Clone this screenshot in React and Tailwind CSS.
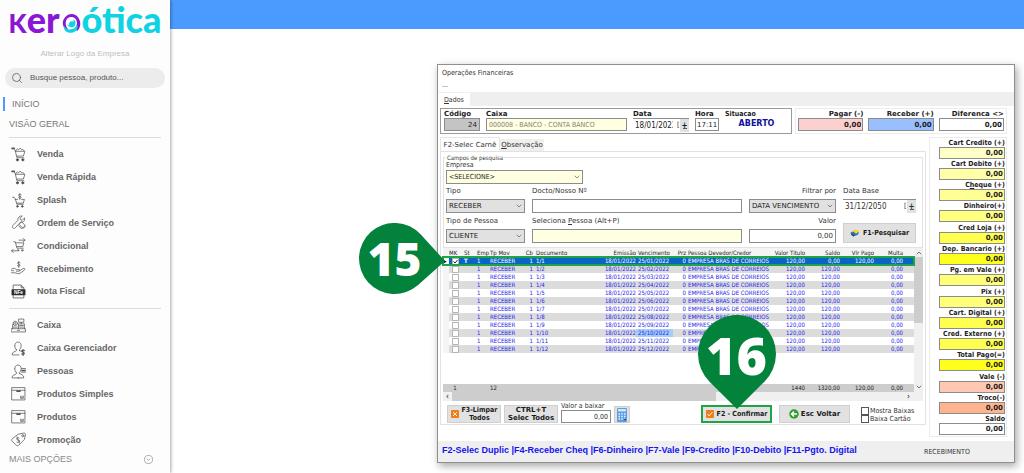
import { ChevronDown, Search } from 'lucide-react';

const LABEL = "font-['DejaVu_Sans_Condensed','DejaVu_Sans',sans-serif] text-[7px] leading-[8px] text-[#333]";
const BOLD = "font-['DejaVu_Sans','Noto_Sans',sans-serif] text-[7px] leading-[8px] font-bold text-[#1c1c1c]";
const BOLD_NARROW = "font-['DejaVu_Sans_Condensed','DejaVu_Sans',sans-serif] text-[7px] leading-[8px] font-bold text-[#1c1c1c]";
const VALUE = "font-['DejaVu_Sans_Condensed','DejaVu_Sans',sans-serif] text-[8px]";
const FIELD = 'block w-full min-w-0 rounded-none border border-[#8c8c8c] px-[2px] outline-none';
const BUTTON = 'flex items-center justify-center border border-[#cfcfcf] bg-[#e1e1e1]';

/* ---------- sidebar icons ---------- */

function Glyph({ children }) {
  return (
    <svg viewBox="0 0 28 28" className="size-[15px] shrink-0" fill="none" stroke="#555" strokeWidth="1.4" strokeLinecap="round" strokeLinejoin="round" aria-hidden="true">
      {children}
    </svg>
  );
}

function CartIcon() {
  return (
    <Glyph>
      <path d="M2 3h4l2 4 3 13h13M8 8h18l-3 9H11" />
      <path d="M9 7c1-4 4-4 5-2 1-3 5-3 6 0 2-1 4 0 4 2" />
      <path d="M2 2.500h4" strokeWidth="3" />
      <circle cx="12" cy="24" r="2" fill="#333" />
      <circle cx="22" cy="24" r="2" fill="#333" />
    </Glyph>
  );
}

function SplashIcon() {
  return (
    <Glyph>
      <path d="M3 8h3l2 3 3 10h12M8 12h4M20 12h5l-2 7H11" />
      <path d="M19 3c-1-1-5-1-5 1s5 2 5 4-4 2-5 1M16.500 1v11" />
      <circle cx="12" cy="25" r="1.500" fill="#333" />
      <circle cx="21" cy="25" r="1.500" fill="#333" />
    </Glyph>
  );
}

function WrenchIcon() {
  return (
    <Glyph>
      <path d="M25 6l-4 4-3-1-1-3 4-4c-5-1-9 3-8 8L3 20c-2 3 2 7 5 4l10-11c5 1 9-2 7-7z" />
      <path d="M16 16l4-3 5 5c3 4-1 8-5 5l-4-5M14 20l6 6 6-6" />
    </Glyph>
  );
}

function ConditionalIcon() {
  return (
    <Glyph>
      <path d="M5 7h3l3 12h12M9 9h15l-2 7H11M15 4h11M23 1l3 3-3 3" />
      <path d="M1 24h9M4 21l-3 3 3 3" />
      <circle cx="13" cy="23" r="1.500" />
      <circle cx="21" cy="23" r="1.500" />
    </Glyph>
  );
}

function HandMoneyIcon() {
  return (
    <Glyph>
      <path d="M17 3c-1-1-5-1-5 1s5 2 5 4-4 2-5 1M14.500 1v11" />
      <path d="M1 15c4-2 6-2 9 1h5c2 0 2 3 0 3h-5M16 18l7-4c2-1 4 1 2 3l-8 6c-4 2-7-1-10-1H1M1 18h4" />
    </Glyph>
  );
}

function InvoiceIcon() {
  return (
    <svg viewBox="0 0 28 28" className="size-[15px] shrink-0" aria-hidden="true">
      <path d="M4 10V2h15l5 5v3M4 20v6h20v-6M19 2v5h5" fill="none" stroke="#555" strokeWidth="1.500" />
      <rect x="1" y="10" width="26" height="11" rx="1" fill="#2b2b2b" />
      <text x="14" y="18.500" textAnchor="middle" fontSize="9" fontWeight="700" fontFamily="Liberation Sans, sans-serif" fill="#fff">NFe</text>
    </svg>
  );
}

function RegisterIcon() {
  return (
    <Glyph>
      <path d="M1 20h26v6H1zM3 20v-8l3-2M25 20v-8M14 20V11h11M12 23h4" />
      <circle cx="8" cy="10" r="4" />
      <path d="M8 8v4M15 2h9v6h-9zM19 8v3M16 14h7M16 17h7M4 17h8" />
    </Glyph>
  );
}

function PersonBase() {
  return (
    <path d="M7 9c0-4 2-7 6-7s6 3 6 7c0 3-2 6-3 7v2M10 16v2c-1 2-8 2-8 7v1h13M10 16c-2-2-3-4-3-7" />
  );
}

function ManagerIcon() {
  return (
    <Glyph>
      <PersonBase />
      <path d="M16 18c1 1 2 1 3 1" />
      <path d="M25 18c-1-2-5-1-5 1s5 2 5 4-4 3-5 1M22.500 16v11" strokeWidth="2" />
    </Glyph>
  );
}

function PeopleIcon() {
  return (
    <Glyph>
      <PersonBase />
      <path d="M16 18c2 1 8 2 8 8H13" />
      <path d="M20 9h7M20 12h7M20 15h7" strokeWidth="2" />
    </Glyph>
  );
}

function BoxIcon() {
  return (
    <Glyph>
      <path d="M2 3h24v23H2zM2 8h24" />
      <path d="M11 9.500h6" strokeWidth="3" />
      <path d="M18 19v4h5v-4M20.500 19v3" />
    </Glyph>
  );
}

function TagIcon() {
  return (
    <Glyph>
      <path d="M14 4l10-2c2 0 3 1 3 3l-2 9-11 11c-1 1-3 1-4 0L2 17c-1-1-1-3 0-4z" />
      <circle cx="22" cy="7" r="2" />
      <path d="M15 11c-2-2-6 1-4 3s4 0 5 2-2 5-5 3M11 9l5 12" />
    </Glyph>
  );
}

const salesItems = [
  ['Venda', CartIcon],
  ['Venda Rápida', CartIcon],
  ['Splash', SplashIcon],
  ['Ordem de Serviço', WrenchIcon],
  ['Condicional', ConditionalIcon],
  ['Recebimento', HandMoneyIcon],
  ['Nota Fiscal', InvoiceIcon],
];

const registerItems = [
  ['Caixa', RegisterIcon],
  ['Caixa Gerenciador', ManagerIcon],
  ['Pessoas', PeopleIcon],
  ['Produtos Simples', BoxIcon],
  ['Produtos', BoxIcon],
  ['Promoção', TagIcon],
];

function Logo() {
  return (
    <div className="flex h-10 items-baseline justify-center font-['Lato',sans-serif] leading-[38px] font-black" aria-label="Keroótica">
      <span className="text-[26px] text-[#8a17d3]">K</span>
      <span className="text-[36px] text-[#8a17d3]">er</span>
      <svg viewBox="0 0 60 60" className="mx-px size-5 shrink-0" fill="none" aria-hidden="true">
        <path d="M14 50A26 26 0 0 1 10 16C20 0 42 -2 52 14C62 28 58 46 48 54L42 46C50 38 50 24 42 16C32 8 18 12 15 24C13 32 14 42 22 50Z" fill="#8a17d3" />
        <path d="M10 38C12 46 20 50 30 49C40 48 46 42 47 34C54 42 48 56 34 59C18 61 6 52 10 38Z" fill="#0fd3e3" />
        <path d="M18 34C22 44 36 46 42 36C46 28 42 22 36 19C40 26 36 30 30 36C26 38 21 38 18 34Z" fill="#0fd3e3" />
        <circle cx="33" cy="34" r="9" fill="#0fd3e3" />
      </svg>
      <span className="text-[36px] text-[#0fd3e3]">ótica</span>
    </div>
  );
}

function NavList({ items, grow }) {
  return (
    <ul className={`flex flex-col ${grow}`}>
      {items.map(([name, Icon]) => (
        <li key={name} className="flex flex-1">
          <a href="#" className="flex flex-1 items-center gap-[11px] pl-[11px] text-[9px] leading-3 font-bold text-[#666]">
            <Icon />
            {name}
          </a>
        </li>
      ))}
    </ul>
  );
}

function Sidebar() {
  return (
    <aside className="z-10 flex w-[170px] shrink-0 flex-col bg-[#fdfdfd] pb-[5px] font-['Liberation_Sans',sans-serif] shadow-[1px_0_3px_rgba(0,0,0,0.35)]">
      <Logo />
      <a href="#" className="mt-2 text-center text-[8px] leading-3 text-[#bdbdbd]">Alterar Logo da Empresa</a>
      <label className="mx-[5px] mt-2 flex h-5 items-center gap-[7px] rounded-full bg-[#ececec] pl-[6px]">
        <Search className="size-3 text-[#555]" strokeWidth={1.5} />
        <input type="search" aria-label="Busca" placeholder="Busque pessoa, produto..." className="min-w-0 flex-1 bg-transparent text-[8px] outline-none placeholder:text-[#555]" />
      </label>
      <a href="#" className="mt-[9px] ml-[3px] border-l-2 border-[#4b9bfa] pl-[7px] text-[9px] leading-[14px] text-[#777]">INÍCIO</a>
      <a href="#" className="mt-[6px] pl-[9px] text-[9px] leading-[14px] text-[#777]">VISÃO GERAL</a>
      <hr className="mx-[9px] mt-[6px] mb-[5px] border-[#dcdcdc]" />
      <NavList items={salesItems} grow="flex-[7]" />
      <hr className="mx-[9px] my-[5px] border-[#dcdcdc]" />
      <NavList items={registerItems} grow="flex-[6]" />
      <button type="button" className="flex items-center justify-between pr-[17px] pl-[9px] text-[9px] leading-[17px] text-[#888]">
        MAIS OPÇÕES
        <svg viewBox="0 0 20 20" className="size-[9px]" fill="none" stroke="#999" strokeWidth="1.8" aria-hidden="true">
          <circle cx="10" cy="10" r="9" />
          <path d="M6 8l4 4 4-4" />
        </svg>
      </button>
    </aside>
  );
}

/* ---------- form pieces ---------- */

function Select({ id, value, tone }) {
  return (
    <div className="relative">
      <select id={id} className={`${FIELD} h-[14px] appearance-none text-[#222] ${tone}`}>
        <option>{value}</option>
      </select>
      <ChevronDown className="pointer-events-none absolute top-[3px] right-[2px] size-2 text-[#555]" />
    </div>
  );
}

function DateField({ id, value }) {
  return (
    <div className={`flex h-[14px] border-t border-[#8c8c8c] ${VALUE}`}>
      <input id={id} defaultValue={value} className="min-w-0 flex-1 pl-[2px] outline-none" />
      <span className="ml-1 w-[3px] overflow-hidden text-[7px] leading-3">[</span>
      <button type="button" aria-label="Ajustar data" className="flex w-[9px] flex-col items-center justify-center bg-[#e1e1e1] text-[8px] leading-[5px] font-bold">
        <span>+</span>
        <span className="h-px w-1 bg-[#555]" />
      </button>
    </div>
  );
}

const topAmounts = [
  ['pagar', 'Pagar (-)', 'bg-[#fbd0cf]'],
  ['receber', 'Receber (+)', 'bg-[#99bfff]'],
  ['diferenca', 'Diferenca <>', 'bg-white'],
];

function HeaderRow() {
  return (
    <div className="flex gap-[3px] pr-[7px] pl-[2px]">
      <div className={`flex flex-1 gap-[6px] border border-[#9a9a9a] px-[3px] pt-[1px] pb-px ${BOLD}`}>
        <div className="w-9">
          <label htmlFor="codigo">Código</label>
          <input id="codigo" defaultValue="24" className={`${FIELD} h-[13px] bg-[#c4c4c4] text-right font-normal`} />
        </div>
        <div className="min-w-0 flex-1">
          <label htmlFor="caixa">Caixa</label>
          <input id="caixa" defaultValue="000008 - BANCO - CONTA BANCO" className={`${FIELD} h-[13px] bg-[#ffffe1] font-['DejaVu_Sans_Condensed','DejaVu_Sans',sans-serif] font-normal text-[#85857a]`} />
        </div>
        <div className="w-14 font-normal">
          <label htmlFor="data" className="font-bold">Data</label>
          <DateField id="data" value="18/01/2022" />
        </div>
        <div className="w-6">
          <label htmlFor="hora">Hora</label>
          <input id="hora" defaultValue="17:11" className={`${FIELD} h-[13px] px-px font-normal`} />
        </div>
        <div className="w-[63px]">
          <p className={BOLD_NARROW}>Situacao</p>
          <p className="pt-[2px] text-center text-[8px] text-[#10109a]">ABERTO</p>
        </div>
      </div>
      <div className={`flex w-[212px] gap-[5px] border border-[#ececec] px-[2px] pt-[1px] text-right ${BOLD}`}>
        {topAmounts.map(([id, text, tone]) => (
          <div key={id} className="flex-1">
            <label htmlFor={id}>{text}</label>
            <input id={id} defaultValue="0,00" className={`${FIELD} h-[13px] px-px text-right ${tone}`} />
          </div>
        ))}
      </div>
    </div>
  );
}

function Cell({ id, label, right, children }) {
  return (
    <div className="flex flex-col gap-1">
      <label htmlFor={id} className={right ? 'text-right' : ''}>{label}</label>
      {children}
    </div>
  );
}

function SearchForm() {
  return (
    <fieldset className={`mx-[2px] border border-[#e2e2e2] pr-[6px] pb-1 pl-[2px] ${LABEL}`}>
      <legend className="px-px text-[6px] leading-[7px]">Campos de pesquisa</legend>
      <div className="flex w-[137px] flex-col gap-px">
        <label htmlFor="empresa">Empresa</label>
        <Select id="empresa" value="<SELECIONE>" tone="bg-[#ffffe1]" />
      </div>
      <div className="mt-[3px] grid grid-cols-[79px_1fr_87px_73px] items-end gap-x-[7px] gap-y-[4px] font-['DejaVu_Sans',sans-serif]">
        <Cell id="tipo" label="Tipo">
          <Select id="tipo" value="RECEBER" tone="bg-[#e1e1e1]" />
        </Cell>
        <Cell id="docto" label="Docto/Nosso Nº">
          <input id="docto" className={`${FIELD} h-[14px]`} />
        </Cell>
        <Cell id="filtro" label="Filtrar por" right>
          <Select id="filtro" value="DATA VENCIMENTO" tone="bg-[#e1e1e1]" />
        </Cell>
        <Cell id="database" label="Data Base">
          <DateField id="database" value="31/12/2050" />
        </Cell>
        <Cell id="tipopessoa" label="Tipo de Pessoa">
          <Select id="tipopessoa" value="CLIENTE" tone="bg-[#e1e1e1]" />
        </Cell>
        <Cell id="pessoa" label={<>Seleciona <u>P</u>essoa (Alt+P)</>}>
          <input id="pessoa" className={`${FIELD} h-[14px] bg-[#ffffe1]`} />
        </Cell>
        <Cell id="valor" label="Valor" right>
          <input id="valor" defaultValue="0,00" className={`${FIELD} h-[14px] text-right`} />
        </Cell>
        <button type="button" className={`${BUTTON} ${BOLD_NARROW} h-5 gap-[3px]`}>
          <svg viewBox="0 0 30 24" className="h-2 w-[10px]" aria-hidden="true">
            <path d="M1 11l12-6 14 3-3 9-12 5z" fill="#2777b8" />
            <path d="M8 6c4-6 17-4 19 2l-9 6z" fill="#f4d52c" />
            <path d="M2 13l10 5v5L4 18z" fill="#123b63" />
          </svg>
          F1-Pesquisar
        </button>
      </div>
    </fieldset>
  );
}

/* ---------- instalments table ---------- */

const columns = [
  ['', 'w-[6px]', ''],
  ['MK', 'w-3', 'text-center'],
  ['St', 'w-[14px]', 'pl-[3px]'],
  ['Emp', 'w-[14px]', 'pl-[2px]'],
  ['Tp Mov', 'w-[34px]', 'pl-px'],
  ['Cb', 'w-[10px]', 'text-right'],
  ['Documento', '', 'pl-[3px]'],
  ['Emissão', 'w-[34px]', 'text-right'],
  ['Vencimento', 'w-[37px]', 'pl-[2px]'],
  ['Prz', 'w-[13px]', 'text-right'],
  ['Pessoa Devedor/Credor', 'w-[87px]', 'pl-[2px]'],
  ['Valor Titulo', 'w-8', 'text-right'],
  ['Saldo', 'w-[35px]', 'text-right'],
  ['Vlr Pago', 'w-[34px]', 'text-right'],
  ['Multa', 'w-[29px]', 'text-right'],
  ['', 'w-[11px]', ''],
];

const rows = Array.from({ length: 12 }, (_, i) => {
  const n = i + 1;
  const first = n === 1;
  return {
    n,
    first,
    cells: ['1', 'RECEBER', '1', `1/${n}`, '18/01/2022', `25/${String(n).padStart(2, '0')}/2022`, '0', 'EMPRESA BRAS DE CORREIOS', '120,00', first ? '0,00' : '120,00', first ? '120,00' : '', '0,00', ''],
  };
});

const totals = ['', '1', '', '', '12', '', '', '', '', '', '', '1440', '1320,00', '120,00', '0,00', ''];

function Pin({ side, children }) {
  return side ? (
    <div className="pointer-events-none absolute top-[-25px] right-full -mr-[2px] h-[71px] w-[86px]">
      <svg viewBox="0 0 86 71" className="absolute inset-0" aria-hidden="true">
        <path d="M86 38L59.1 62A35.5 35.5 0 1 1 61.8 11.6Z" fill="#02823a" />
      </svg>
      <span className="relative block w-[71px] text-center font-['Open_Sans',sans-serif] text-[46px] leading-[70px] font-extrabold text-white">{children}</span>
    </div>
  ) : (
    <div className="pointer-events-none absolute bottom-full left-1/2 z-10 -mb-1 h-[94px] w-[78px] -translate-x-1/2">
      <svg viewBox="0 0 78 94" className="absolute inset-0" aria-hidden="true">
        <path d="M39 94L11.8 66.900A39 39 0 1 1 66.200 66.900Z" fill="#02823a" />
      </svg>
      <span className="relative block text-center font-['Open_Sans',sans-serif] text-[52px] leading-[79px] font-extrabold text-white">{children}</span>
    </div>
  );
}

function InstalmentTable() {
  return (
    <div className="mx-[2px] flex font-['DejaVu_Sans_Condensed','DejaVu_Sans',sans-serif] text-[6px]">
      <div className="relative min-w-0 flex-1">
        <table className="w-full table-fixed border-collapse leading-[8px] whitespace-nowrap">
          <thead className="bg-[#f4f4f4] text-[#222]">
            <tr>
              {columns.map(([name, width, align], i) => (
                <th key={i} className={`h-[9px] p-0 text-left font-normal ${width} ${align}`}>{name}</th>
              ))}
            </tr>
          </thead>
          <tbody>
            {rows.map(({ n, first, cells }) => (
              <tr key={n} className={first ? 'bg-[#0a64c8] text-white outline-2 -outline-offset-1 outline-[#1ea345]' : n % 2 ? 'bg-white text-[#1c1cf0]' : 'bg-[#dcdcdc] text-[#1c1cf0]'}>
                <td className="h-2 bg-[#f4f4f4] p-0 text-[5px] text-black">{first ? '▶' : ''}</td>
                <td className="p-0">
                  <span className="mx-auto grid size-[7px]">
                    <input type="checkbox" aria-label={`Marcar parcela ${n}`} defaultChecked={first} className="peer col-start-1 row-start-1 size-[7px] appearance-none border border-[#b5b5b5] bg-white" />
                    <svg viewBox="0 0 14 14" className="pointer-events-none invisible col-start-1 row-start-1 size-[7px] peer-checked:visible" fill="none" stroke="#222" strokeWidth="2" aria-hidden="true">
                      <path d="M3 7l3 3 5-6" />
                    </svg>
                  </span>
                </td>
                <td className="p-0 pl-[3px] font-bold">{first ? 'T' : ''}</td>
                {cells.map((cell, i) => (
                  <td key={i} className={`p-0 ${columns[i + 3][2]} ${n === 10 && i === 5 ? 'bg-[#a6cdf5]' : ''}`}>{cell}</td>
                ))}
              </tr>
            ))}
          </tbody>
          <tfoot className="text-[#222]">
            <tr>
              <td colSpan={16} className="h-[31px] p-0" />
            </tr>
            <tr className="bg-[#cdcdcd]">
              {totals.map((cell, i) => (
                <td key={i} className={`h-2 p-0 ${columns[i][2]}`}>{cell}</td>
              ))}
            </tr>
          </tfoot>
        </table>
        <div className="flex h-[9px] items-center justify-between bg-[#f0f0f0] text-[8px] leading-[8px]">
          <span className="w-[9px] text-center">‹</span>
          <span className="h-full w-[56%] bg-[#cdcdcd]" />
          <span className="flex-1 pr-1 text-right">›</span>
        </div>
        <Pin side>15</Pin>
      </div>
      <div className="flex w-[9px] flex-col items-center bg-[#f0f0f0] pt-px pb-[10px]">
        <ChevronDown className="size-2 rotate-180 text-[#333]" />
        <span className="h-[66px] w-full bg-[#cdcdcd]" />
        <ChevronDown className="mt-auto size-2 text-[#333]" />
      </div>
    </div>
  );
}

function OrangeIcon({ path }) {
  return (
    <svg viewBox="0 0 20 20" className="size-2 shrink-0" fill="none" aria-hidden="true">
      <rect width="20" height="20" rx="2" fill="#ef7d1a" />
      <path d={path} stroke="#fff0dc" strokeWidth="2.500" />
    </svg>
  );
}

function ActionBar() {
  return (
    <div className={`flex items-end gap-[3px] px-[6px] pt-px pb-px ${BOLD}`}>
      <button type="button" className={`${BUTTON} ${BOLD_NARROW} h-[18px] w-[54px] gap-[3px]`}>
        <OrangeIcon path="M5 5l10 10M15 5L5 15" />
        <span>F3-Limpar<br />Todos</span>
      </button>
      <button type="button" className={`${BUTTON} h-[18px] w-[54px]`}>
        <span>CTRL+T<br />Selec Todos</span>
      </button>
      <div className={`w-[50px] ${LABEL}`}>
        <label htmlFor="baixar" className="block font-normal whitespace-nowrap">Valor a baixar</label>
        <input id="baixar" defaultValue="0,00" className={`${FIELD} h-[13px] text-right font-normal`} />
      </div>
      <button type="button" aria-label="Calculadora" className={`${BUTTON} h-[17px] w-4`}>
        <svg viewBox="0 0 20 28" className="h-[14px] w-[10px]" aria-hidden="true">
          <rect width="20" height="28" rx="2" fill="#5c9fe0" />
          <rect x="2" y="2" width="16" height="5" fill="#cfe6fb" />
          <path d="M3 12h14M3 17h14M3 22h14" stroke="#e9f4ff" strokeWidth="3" strokeDasharray="3 2.500" />
          <path d="M14 23h4" stroke="#1f4f9c" strokeWidth="3" />
        </svg>
      </button>
      <div className="relative ml-auto">
        <button type="button" className={`flex h-[18px] w-[71px] items-center justify-center gap-[3px] border-2 border-[#1ea345] bg-[#e1e1e1] whitespace-nowrap ${BOLD_NARROW}`}>
          <OrangeIcon path="M4 10l4 5 8-10" />
          F2 - Confirmar
        </button>
        <Pin>16</Pin>
      </div>
      <button type="button" className={`${BUTTON} ml-1 h-[18px] w-[71px] gap-[2px]`}>
        <svg viewBox="0 0 20 20" className="size-[10px]" fill="none" aria-hidden="true">
          <circle cx="10" cy="10" r="9.500" fill="#2f9e2f" />
          <path d="M16 10H6M10 5l-5 5 5 5" stroke="#fff" strokeWidth="3" />
        </svg>
        Esc Voltar
      </button>
      <div className={`ml-2 w-[58px] ${LABEL}`}>
        {['Mostra Baixas', 'Baixa Cartão'].map((name) => (
          <label key={name} className="flex items-center gap-px font-normal whitespace-nowrap">
            <input type="checkbox" className="size-2 appearance-none border border-[#555] bg-white" />
            {name}
          </label>
        ))}
      </div>
    </div>
  );
}

const payments = [
  ['Cart Credito (+)', 'bg-[#ffffc8]'],
  ['Cart Debito (+)', 'bg-[#ffffa8]'],
  [<>C<u>h</u>eque (+)</>, 'bg-[#ffff96]'],
  ['Dinheiro(+)', 'bg-[#ffff80]'],
  ['Cred Loja (+)', 'bg-[#ffff50]'],
  ['Dep. Bancario (+)', 'bg-[#ffff1e]'],
  ['Pg. em Vale (+)', 'bg-[#ffff78]'],
  ['Pix (+)', 'bg-[#ffff78]'],
  ['Cart. Digital (+)', 'bg-[#ffff50]'],
  ['Cred. Externo (+)', 'bg-[#ffff50]'],
  ['Total Pago(=)', 'bg-[#ffff1e]'],
  ['Vale (-)', 'bg-[#ffc8b0]'],
  ['Troco(-)', 'bg-[#ffb490]'],
  ['Saldo', 'bg-white'],
];

function PaymentColumn() {
  return (
    <div className={`flex w-[78px] flex-col border border-[#ececec] px-px text-right ${BOLD_NARROW}`}>
      {payments.map(([name, tone], i) => (
        <div key={i} className="flex flex-1 flex-col justify-center">
          <label htmlFor={`pay${i}`} className="whitespace-nowrap">{name}</label>
          <input id={`pay${i}`} defaultValue="0,00" className={`${FIELD} ml-auto h-3 max-w-[66px] px-px text-right font-['DejaVu_Sans',sans-serif] ${tone}`} />
        </div>
      ))}
    </div>
  );
}

function FinanceWindow() {
  return (
    <section className="mt-[35px] mr-[9px] mb-[10px] ml-[267px] flex flex-col border border-[#8f8f8f] bg-white shadow-[2px_3px_8px_rgba(0,0,0,0.35)]">
      <h1 className={`${LABEL} pt-1 pl-1`}>Operações Financeiras</h1>
      <button type="button" className={`${LABEL} mt-1 pb-[3px] pl-1 text-left`}>...</button>
      <div className="flex h-[14px] bg-[#efefef]">
        <button type="button" className={`${LABEL} mt-px bg-white px-[6px]`}><u>D</u>ados</button>
      </div>
      <div className="pt-[2px]">
        <HeaderRow />
      </div>
      <div className="flex flex-1 items-stretch gap-[3px] pt-[3px] pr-[7px] pb-1 pl-[2px]">
        <div className="min-w-0 flex-1">
          <div className={`flex items-end ${LABEL}`}>
            <button type="button" className="h-[14px] w-[60px] border-x border-t border-[#e6e6e6] bg-white font-['DejaVu_Sans',sans-serif] whitespace-nowrap">F2-Selec Carnê</button>
            <button type="button" className="h-3 w-[44px] bg-[#efefef] font-['DejaVu_Sans',sans-serif] whitespace-nowrap"><u>O</u>bservação</button>
          </div>
          <div className="border border-[#e2e2e2] pt-[2px]">
            <SearchForm />
            <InstalmentTable />
            <ActionBar />
          </div>
        </div>
        <PaymentColumn />
      </div>
      <footer className="flex h-[21px] items-center bg-[#efefef] pl-1">
        <p className="flex-1 pb-1 font-['Liberation_Sans',sans-serif] text-[9px] leading-[14px] font-bold text-[#1414f0]">
          F2-Selec Duplic |F4-Receber Cheq |F6-Dinheiro |F7-Vale |F9-Credito |F10-Debito |F11-Pgto. Digital
        </p>
        <p className={`w-[90px] ${LABEL}`}>RECEBIMENTO</p>
      </footer>
    </section>
  );
}

export default function App() {
  return (
    <div className="flex min-h-screen bg-white">
      <Sidebar />
      <main className="flex min-w-0 flex-1 flex-col">
        <header className="h-[29px] shrink-0 bg-[#4b9bff]" />
        <div className="flex flex-1 flex-col [&>section]:flex-1">
          <FinanceWindow />
        </div>
      </main>
    </div>
  );
}
